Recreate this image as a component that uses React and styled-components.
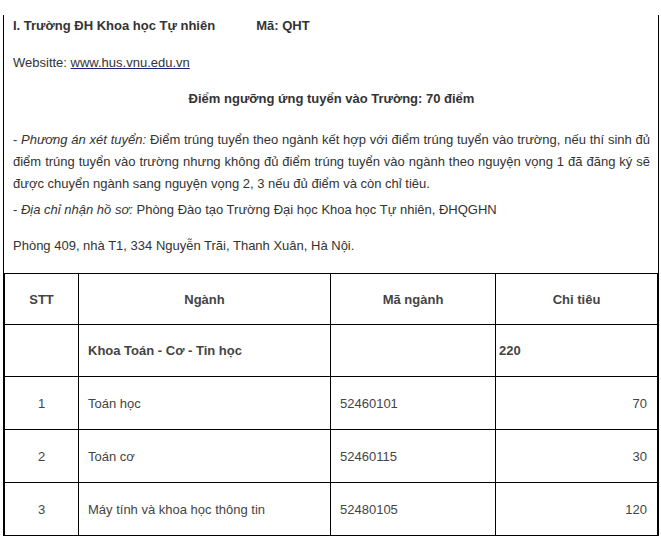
import React from "react";
import styled, { createGlobalStyle } from "styled-components";

const GlobalStyle = createGlobalStyle`
  html, body {
    margin: 0;
    padding: 0;
    background: #fff;
  }
  body {
    font-family: "Liberation Sans", Arial, sans-serif;
    font-size: 13px;
    color: #333;
  }
`;

// Outer article box with side borders only
const Article = styled.div`
  margin-left: 3px;
  width: 654px;
  border-left: 1px solid #000;
  border-right: 1px solid #000;
  box-sizing: content-box;
`;

const Para = styled.p`
  margin: ${(p) => p.$top}px 0 0;
  padding: 0 8px 0 9px;
  line-height: 22px;
  text-align: ${(p) => p.$align || "left"};
  font-weight: ${(p) => (p.$bold ? "bold" : "normal")};
`;

const Code = styled.span`
  margin-left: 41px;
`;

const Link = styled.a`
  color: #333;
  text-decoration: underline;
  text-decoration-color: #1a237e;
`;

const Table = styled.table`
  margin-top: 16px;
  width: 100%;
  border-collapse: collapse;
  table-layout: fixed;
`;

const Th = styled.th`
  border: 1px solid #000;
  height: 50px;
  padding: 0;
  font-weight: bold;
  text-align: center;
  color: #444;
`;

const Td = styled.td`
  border: 1px solid #000;
  height: ${(p) => p.$h ?? 52}px;
  padding: 0 ${(p) => p.$padR ?? 9}px 0 ${(p) => p.$padL ?? 9}px;
  text-align: ${(p) => p.$align || "left"};
  font-weight: ${(p) => (p.$bold ? "bold" : "normal")};
  color: #444;
`;

const rows = [
  { stt: "1", name: "Toán học", code: "52460101", quota: "70" },
  { stt: "2", name: "Toán cơ", code: "52460115", quota: "30" },
  { stt: "3", name: "Máy tính và khoa học thông tin", code: "52480105", quota: "120" },
];

export default function App() {
  return (
    <>
      <GlobalStyle />
      <Article>
        <Para $top={15} $bold>
          I. Trường ĐH Khoa học Tự nhiên<Code>Mã: QHT</Code>
        </Para>
        <Para $top={15}>
          Websitte: <Link href="#">www.hus.vnu.edu.vn</Link>
        </Para>
        <Para $top={14} $align="center" $bold>
          Điểm ngưỡng ứng tuyển vào Trường: 70 điểm
        </Para>
        <Para $top={19} $align="justify">
          - <em>Phương án xét tuyển:</em> Điểm trúng tuyển theo ngành kết hợp với điểm
          trúng tuyển vào trường, nếu thí sinh đủ điểm trúng tuyển vào trường nhưng không
          đủ điểm trúng tuyển vào ngành theo nguyện vọng 1 đã đăng ký sẽ được chuyển ngành
          sang nguyện vọng 2, 3 nếu đủ điểm và còn chỉ tiêu.
        </Para>
        <Para $top={4}>
          - <em>Địa chỉ nhận hồ sơ:</em> Phòng Đào tạo Trường Đại học Khoa học Tự nhiên,
          ĐHQGHN
        </Para>
        <Para $top={14}>Phòng 409, nhà T1, 334 Nguyễn Trãi, Thanh Xuân, Hà Nội.</Para>
        <Table>
          <colgroup>
            <col style={{ width: 74 }} />
            <col style={{ width: 252 }} />
            <col style={{ width: 165 }} />
            <col />
          </colgroup>
          <thead>
            <tr>
              <Th>STT</Th>
              <Th>Ngành</Th>
              <Th>Mã ngành</Th>
              <Th>Chỉ tiêu</Th>
            </tr>
          </thead>
          <tbody>
            <tr>
              <Td $h={51} />
              <Td $h={51} $bold>Khoa Toán - Cơ - Tin học</Td>
              <Td $h={51} />
              <Td $h={51} $bold $padL={3}>220</Td>
            </tr>
            {rows.map((r) => (
              <tr key={r.stt}>
                <Td $align="center">{r.stt}</Td>
                <Td>{r.name}</Td>
                <Td>{r.code}</Td>
                <Td $align="right" $padR={10}>{r.quota}</Td>
              </tr>
            ))}
          </tbody>
        </Table>
      </Article>
    </>
  );
}
